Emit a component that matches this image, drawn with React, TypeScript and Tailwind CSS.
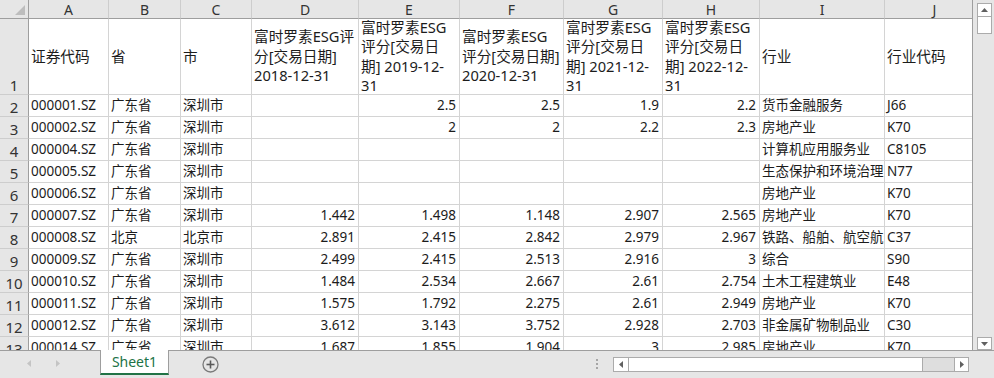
import React from "react";

const COLS =
  "grid grid-cols-[29px_80px_72px_71px_107px_101px_104px_99px_97px_125px_100px] w-max";
const LETTERS = ["A", "B", "C", "D", "E", "F", "G", "H", "I", "J"];

const HEAD: string[][] = [
  ["证券代码"],
  ["省"],
  ["市"],
  ["富时罗素ESG评", "分[交易日期]", "2018-12-31"],
  ["富时罗素ESG", "评分[交易日", "期] 2019-12-", "31"],
  ["富时罗素ESG", "评分[交易日期]", "2020-12-31"],
  ["富时罗素ESG", "评分[交易日", "期] 2021-12-", "31"],
  ["富时罗素ESG", "评分[交易日", "期] 2022-12-", "31"],
  ["行业"],
  ["行业代码"],
];

const ROWS: string[][] = [
  ["000001.SZ", "广东省", "深圳市", "", "2.5", "2.5", "1.9", "2.2", "货币金融服务", "J66"],
  ["000002.SZ", "广东省", "深圳市", "", "2", "2", "2.2", "2.3", "房地产业", "K70"],
  ["000004.SZ", "广东省", "深圳市", "", "", "", "", "", "计算机应用服务业", "C8105"],
  ["000005.SZ", "广东省", "深圳市", "", "", "", "", "", "生态保护和环境治理业", "N77"],
  ["000006.SZ", "广东省", "深圳市", "", "", "", "", "", "房地产业", "K70"],
  ["000007.SZ", "广东省", "深圳市", "1.442", "1.498", "1.148", "2.907", "2.565", "房地产业", "K70"],
  ["000008.SZ", "北京", "北京市", "2.891", "2.415", "2.842", "2.979", "2.967", "铁路、船舶、航空航天和其他运输设备制造业", "C37"],
  ["000009.SZ", "广东省", "深圳市", "2.499", "2.415", "2.513", "2.916", "3", "综合", "S90"],
  ["000010.SZ", "广东省", "深圳市", "1.484", "2.534", "2.667", "2.61", "2.754", "土木工程建筑业", "E48"],
  ["000011.SZ", "广东省", "深圳市", "1.575", "1.792", "2.275", "2.61", "2.949", "房地产业", "K70"],
  ["000012.SZ", "广东省", "深圳市", "3.612", "3.143", "3.752", "2.928", "2.703", "非金属矿物制品业", "C30"],
  ["000014.SZ", "广东省", "深圳市", "1.687", "1.855", "1.904", "3", "2.985", "房地产业", "K70"],
];

function Tri({ dir, color, w = 7, h = 7 }: { dir: "l" | "r" | "u" | "d"; color: string; w?: number; h?: number }) {
  const pts =
    dir === "l"
      ? `${w},0 ${w},${h} 0,${h / 2}`
      : dir === "r"
      ? `0,0 0,${h} ${w},${h / 2}`
      : dir === "u"
      ? `0,${h} ${w},${h} ${w / 2},0`
      : `0,0 ${w},0 ${w / 2},${h}`;
  return (
    <svg width={w} height={h} viewBox={`0 0 ${w} ${h}`}>
      <polygon points={pts} fill={color} />
    </svg>
  );
}

export default function App() {
  return (
    <div className="w-[994px] h-[378px] overflow-hidden bg-[#e6e6e6] flex flex-col font-['Noto_Sans','Noto_Sans_CJK_SC',sans-serif] text-[#1c1c1c]">
      <div className="flex h-[350px]">
        <div className="w-[973px] h-[350px] overflow-hidden border-r border-[#9e9e9e] bg-white">
          <div className={COLS}>
            {/* column header row */}
            <div className="h-[19px] border-r border-b border-[#9e9e9e] bg-[#e6e6e6] flex justify-end items-end pr-[3px] pb-[3px]">
              <svg width="10" height="10" viewBox="0 0 10 10">
                <polygon points="10,0 10,10 0,10" fill="#bdbdbd" />
              </svg>
            </div>
            {LETTERS.map((l) => (
              <div
                key={l}
                className="h-[19px] border-r border-b border-[#cdcdcd] border-b-[#9e9e9e] bg-[#e6e6e6] text-center text-[14px] leading-[18px] pt-[1px] text-[#333]"
              >
                {l}
              </div>
            ))}

            {/* row 1 */}
            <div className="h-[76px] border-r border-b border-[#9e9e9e] border-b-[#cdcdcd] bg-[#e6e6e6] flex justify-center items-end text-[15px] leading-[17px] text-[#333]">
              1
            </div>
            {HEAD.map((lines, i) => (
              <div
                key={i}
                className="h-[76px] border-r border-b border-[#d4d4d4] overflow-hidden flex flex-col justify-center pl-[2px] text-[14.67px] leading-[19.5px] whitespace-nowrap"
              >
                {lines.map((t, j) => (
                  <div key={j}>{t}</div>
                ))}
              </div>
            ))}

            {/* data rows */}
            {ROWS.map((r, ri) => (
              <React.Fragment key={ri}>
                <div className="h-[22px] border-r border-b border-[#9e9e9e] border-b-[#cdcdcd] bg-[#e6e6e6] flex justify-center items-end text-[15px] leading-[17px] text-[#333]">
                  {ri + 2}
                </div>
                {r.map((v, ci) => {
                  const num = ci >= 3 && ci <= 7;
                  return (
                    <div
                      key={ci}
                      className={
                        num
                          ? "h-[22px] border-r border-b border-[#d4d4d4] overflow-hidden whitespace-nowrap text-right pr-[3px] text-[13.5px] leading-[20px]"
                          : "h-[22px] border-r border-b border-[#d4d4d4] overflow-hidden whitespace-nowrap pl-[2px] text-[13.5px] leading-[20px]"
                      }
                    >
                      {v}
                    </div>
                  );
                })}
              </React.Fragment>
            ))}
          </div>
        </div>

        {/* vertical scrollbar */}
        <div className="w-[21px] h-[350px] flex flex-col pl-[4px] pt-[3px]">
          <div className="w-[15px] h-[14px] bg-white border border-[#ababab] flex items-center justify-center">
            <Tri dir="u" color="#606060" w={7} h={4} />
          </div>
          <div className="w-[15px] h-[17px] bg-white border border-t-0 border-[#ababab]" />
          <div className="flex-1" />
          <div className="w-[15px] h-[13px] bg-white border border-[#ababab] flex items-center justify-center">
            <Tri dir="d" color="#606060" w={7} h={4} />
          </div>
        </div>
      </div>

      {/* bottom tab bar */}
      <div className="h-[28px] border-t border-[#9e9e9e] flex items-start">
        <div className="w-[100px] h-[24px] flex items-center pl-[27px] gap-[25px]">
          <Tri dir="l" color="#c4c4c4" w={4} h={7} />
          <Tri dir="r" color="#c4c4c4" w={4} h={7} />
        </div>
        <div className="w-[69px] h-[25px] -mt-[1px] bg-white border-x border-[#9e9e9e] border-b-2 border-b-[#217346] flex items-center justify-center text-[14px] leading-[18px] text-[#217346]">
          Sheet1
        </div>
        <div className="ml-[33px] mt-[5px] w-[17px] h-[17px]">
          <svg width="17" height="17" viewBox="0 0 17 17">
            <circle cx="8.5" cy="8.5" r="7.5" fill="none" stroke="#7a7a7a" strokeWidth="1.3" />
            <line x1="4.5" y1="8.5" x2="12.5" y2="8.5" stroke="#5a5a5a" strokeWidth="1.6" />
            <line x1="8.5" y1="4.5" x2="8.5" y2="12.5" stroke="#5a5a5a" strokeWidth="1.6" />
          </svg>
        </div>
        <div className="flex-1" />
        <div className="mt-[8px] flex flex-col gap-[2px]">
          <div className="w-[2px] h-[2px] bg-[#a6a6a6]" />
          <div className="w-[2px] h-[2px] bg-[#a6a6a6]" />
          <div className="w-[2px] h-[2px] bg-[#a6a6a6]" />
        </div>
        <div className="ml-[15px] mt-[6px] w-[356px] h-[15px] flex border border-[#ababab] bg-[#dedede]">
          <div className="w-[15px] h-full bg-white border-r border-[#ababab] flex items-center justify-center">
            <Tri dir="l" color="#606060" w={4} h={7} />
          </div>
          <div className="w-[294px] h-full bg-white border-r border-[#ababab]" />
          <div className="flex-1" />
          <div className="w-[14px] h-full bg-white border-l border-[#ababab] flex items-center justify-center">
            <Tri dir="r" color="#606060" w={4} h={7} />
          </div>
        </div>
        <div className="w-[25px]" />
      </div>
    </div>
  );
}
